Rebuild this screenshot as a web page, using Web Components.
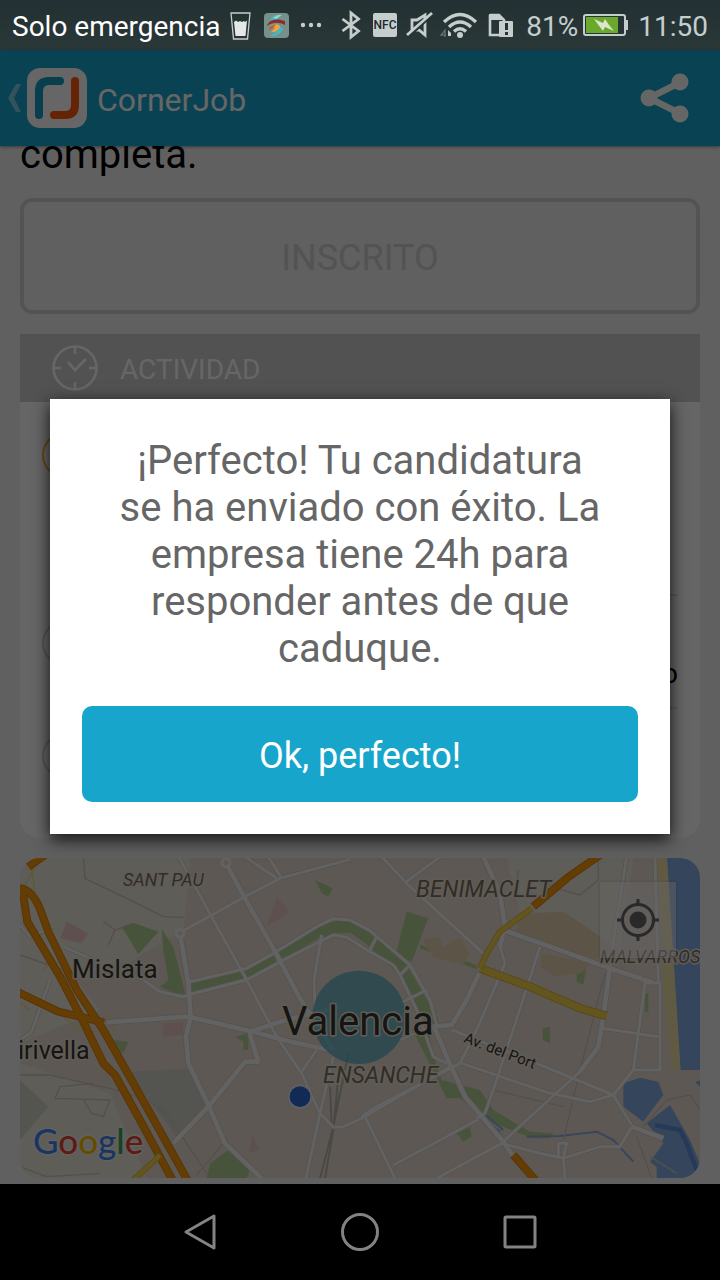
<!DOCTYPE html>
<html lang="es">
<head>
<meta charset="utf-8">
<meta name="viewport" content="width=device-width, initial-scale=1">
<title>CornerJob</title>
<style>
  body { margin: 0; background: #000; font-family: Roboto, "Liberation Sans", sans-serif; }
</style>
</head>
<body>
<phone-screen>
  <status-bar slot="status" carrier="Solo emergencia" battery="81%" time="11:50"></status-bar>
  <app-bar heading="CornerJob"></app-bar>
  <job-page>
    <span slot="description">completa.</span>
    <activity-card heading="ACTIVIDAD">
      <activity-step size="tall" active></activity-step>
      <activity-step>o</activity-step>
      <activity-step last></activity-step>
    </activity-card>
    <city-map></city-map>
  </job-page>
  <message-dialog slot="overlay" action="Ok, perfecto!">¡Perfecto! Tu candidatura se ha enviado con éxito. La empresa tiene 24h para responder antes de que caduque.</message-dialog>
  <nav-bar slot="nav"></nav-bar>
</phone-screen>

<script>
const ICONS = {
  glass: [20, 32, `<path d="M0 4H19L16.500 30H2.500Z" fill="none" stroke="#c5cecd" stroke-width="1.300"/><path d="M3 13L5 11.500L7 13L9 12L11 13L13 12L14 13L16 11.500L14.500 27H4.500Z" fill="#e4e9e8"/>`],
  app: [28, 32, `<rect x="3" y="4" width="25" height="25" rx="4" fill="#76908a"/><path d="M20 6C12 6 9 9 9 13L18 16L22 20C20 25 14 28 9 27L15 23L17 19L12 17" fill="#48b5c4"/><path d="M6 17C8 10 16 9 24 12L24 16C18 13 12 13 6 17Z" fill="#8d2c2b"/><path d="M9 18C13 14 19 15 19 18C17 22 13 24 10 23L14 19Z" fill="#eca53a"/><path d="M9 18L15 15L13 18L8 21Z" fill="#d54b2b"/><path d="M12 9Q16 5 21 6L15 10Z" fill="#91d4d5"/>`],
  dots: [26, 32, `<g fill="#c5cecd"><circle cx="4" cy="16" r="2.200"/><circle cx="12" cy="16" r="2.200"/><circle cx="20" cy="16" r="2.200"/></g>`],
  bluetooth: [26, 32, `<path d="M4.500 10L20.500 22L13 28V4L20.500 10L4.500 22" fill="none" stroke="#c5cecd" stroke-width="2.800"/>`],
  nfc: [24, 32, `<rect x="-1" y="4" width="24" height="24" rx="2" fill="#c5cecd"/><text x="11" y="20" text-anchor="middle" font-size="12" font-weight="500" fill="#1c2829">NFC</text>`],
  mute: [26, 32, `<path d="M4 21V11H9L17 6V26L11 21Z" fill="none" stroke="#c5cecd" stroke-width="2.800"/><path d="M-1 29L24 6" stroke="#263435" stroke-width="3"/><path d="M-1 26L24 4" stroke="#c5cecd" stroke-width="2.800"/>`],
  wifi: [36, 32, `<g fill="none" stroke="#c5cecd" stroke-width="3.400"><path d="M0 13Q16 -2 32 13"/><path d="M5 18Q16 8 27 18"/><path d="M10 22.500Q16 17 22 22.500"/></g><circle cx="16" cy="26" r="3" fill="#c5cecd"/><path d="M4 21L7 24V27H4Z" fill="#c5cecd"/><path d="M1 28V21L-3 26H2" fill="none" stroke="#64706f" stroke-width="1.300"/>`],
  sim: [26, 32, `<path d="M0 6V26H14M0 6H9L14 11V13" fill="none" stroke="#c5cecd" stroke-width="2.600"/><path d="M-1 5H9L15 11H-1Z" fill="#c5cecd"/><rect x="9" y="12" width="14" height="16" rx="1" fill="#c5cecd"/><path d="M16.500 14V21M16.500 23V26" stroke="#263435" stroke-width="3"/>`],
  battery: [45, 32, `<rect x="1" y="6" width="41" height="20" rx="2" fill="#263435" stroke="#c5cecd" stroke-width="2"/><path d="M43 11H45V21H43Z" fill="#c5cecd"/><path d="M3 8H35V24H3Z" fill="#6aa92b"/><path d="M11 10L20 14L22 10L26 16L31 22L22 18L20 22Z" fill="#dbe6cc"/>`],
  back: [14, 28, `<path d="M8 0H13L6 14L13 28H8L0 14Z" fill="#fff" fill-opacity=".45"/>`],
  logo: [60, 60, `<rect width="60" height="60" rx="13" fill="#fff"/><path d="M12 47V23Q12 13 22 13H33" fill="none" stroke="#149fc2" stroke-width="8" stroke-linecap="round"/><path d="M48 13V37Q48 47 38 47H27" fill="none" stroke="#ff5a12" stroke-width="8" stroke-linecap="round"/>`],
  share: [50, 50, `<path d="M41 9L9 25L41 41" fill="none" stroke="#fff" stroke-width="6.500"/><g fill="#fff"><circle cx="40" cy="9" r="8.500"/><circle cx="9" cy="25" r="8.500"/><circle cx="40" cy="41" r="8.500"/></g>`],
  clock: [46, 46, `<g fill="none" stroke="#fff" stroke-width="2.600"><circle cx="23" cy="23" r="21.500"/><path d="M23 1V9M23 37V45M1 23H9M37 23H45M16 17L23 25L34 14"/></g>`],
  locate: [44, 44, `<g fill="none" stroke="#666" stroke-width="3"><circle cx="22" cy="22" r="15.500"/><path d="M22 1V7M22 37V43M1 22H7M37 22H43"/></g><circle cx="22" cy="22" r="8.500" fill="#666"/>`],
  navBack: [40, 40, `<path d="M6 20L34 4V36Z" fill="none" stroke="#838383" stroke-width="3" stroke-linejoin="round"/>`],
  navHome: [40, 40, `<circle cx="20" cy="20" r="17.500" fill="none" stroke="#838383" stroke-width="3"/>`],
  navRecent: [40, 40, `<rect x="5" y="5" width="30" height="30" rx="1" fill="none" stroke="#838383" stroke-width="3"/>`]
};

class UiIcon extends HTMLElement {
  connectedCallback() {
    const [w, h, body] = ICONS[this.getAttribute('name')];
    this.attachShadow({ mode: 'open' }).innerHTML = `
      <style>
        :host { display: block; flex: none; }
        svg { display: block; overflow: visible; }
      </style>
      <svg width="${w}" height="${h}" viewBox="0 0 ${w} ${h}" aria-hidden="true">${body}</svg>`;
  }
}

class PhoneScreen extends HTMLElement {
  connectedCallback() {
    this.attachShadow({ mode: 'open' }).innerHTML = `
      <style>
        :host { display: flex; flex-direction: column; min-height: 100vh; }
        main { position: relative; flex: 1; display: flex; flex-direction: column; background: #f0f0f0; }
      </style>
      <slot name="status"></slot>
      <main>
        <slot></slot>
        <slot name="overlay"></slot>
      </main>
      <slot name="nav"></slot>`;
  }
}

class StatusBar extends HTMLElement {
  connectedCallback() {
    this.attachShadow({ mode: 'open' }).innerHTML = `
      <style>
        :host {
          display: flex;
          justify-content: space-between;
          align-items: center;
          height: 50px;
          padding: 0 12px;
          background: linear-gradient(#223033, #2b3838);
          color: #c5cecd;
          font-size: 28px;
          line-height: 32px;
          white-space: nowrap;
        }
        div { display: flex; align-items: center; gap: 10px; }
        span, time { padding-top: 4px; }
        .power { gap: 5px; }
        .carrier { color: #fff; }
      </style>
      <div>
        <span class="carrier">${this.getAttribute('carrier')}</span>
        <ui-icon name="glass"></ui-icon>
        <ui-icon name="app"></ui-icon>
        <ui-icon name="dots"></ui-icon>
      </div>
      <div>
        <ui-icon name="bluetooth"></ui-icon>
        <ui-icon name="nfc"></ui-icon>
        <ui-icon name="mute"></ui-icon>
        <ui-icon name="wifi"></ui-icon>
        <ui-icon name="sim"></ui-icon>
        <div class="power">
          <span>${this.getAttribute('battery')}</span>
          <ui-icon name="battery"></ui-icon>
        </div>
        <time>${this.getAttribute('time')}</time>
      </div>`;
  }
}

class AppBar extends HTMLElement {
  connectedCallback() {
    this.attachShadow({ mode: 'open' }).innerHTML = `
      <style>
        :host {
          display: flex;
          align-items: center;
          height: 96px;
          padding: 0 30px 0 8px;
          background: #18a5cc;
          box-shadow: 0 1px 3px rgba(0, 0, 0, 0.4);
          color: #fff;
        }
        button {
          display: flex;
          align-items: center;
          gap: 5px;
          padding: 0;
          border: 0;
          background: none;
          cursor: pointer;
        }
        h1 { flex: 1; margin: 0 0 0 10px; padding-top: 4px; font-size: 32px; font-weight: 400; line-height: 40px; }
      </style>
      <button type="button" aria-label="Volver">
        <ui-icon name="back"></ui-icon>
        <ui-icon name="logo"></ui-icon>
      </button>
      <h1>${this.getAttribute('heading')}</h1>
      <button type="button" aria-label="Compartir"><ui-icon name="share"></ui-icon></button>`;
  }
}

class JobPage extends HTMLElement {
  connectedCallback() {
    this.attachShadow({ mode: 'open' }).innerHTML = `
      <style>
        :host { display: flex; flex-direction: column; gap: 20px; padding: 0 20px 6px; }
        /* last line of the description, scrolled half under the app bar */
        .description {
          display: flex;
          align-items: flex-end;
          height: 32px;
          overflow: hidden;
          color: #000;
          font-size: 40px;
          line-height: 47px;
        }
        button {
          height: 116px;
          padding: 4px 0 0;
          border: 4px solid #cfcfcf;
          border-radius: 12px;
          background: none;
          color: #cfcfcf;
          font: 36px Roboto, "Liberation Sans", sans-serif;
        }
      </style>
      <div class="description"><slot name="description"></slot></div>
      <button type="button">INSCRITO</button>
      <slot></slot>`;
  }
}

class ActivityCard extends HTMLElement {
  connectedCallback() {
    this.attachShadow({ mode: 'open' }).innerHTML = `
      <style>
        :host { display: block; background: #fff; border-radius: 0 0 20px 20px; }
        header {
          display: flex;
          align-items: center;
          gap: 22px;
          height: 68px;
          padding: 0 32px;
          background: #cdcdcd;
        }
        h2 { margin: 0; padding-top: 4px; color: #fff; font-size: 28px; font-weight: 400; line-height: 36px; }
      </style>
      <header>
        <ui-icon name="clock"></ui-icon>
        <h2>${this.getAttribute('heading')}</h2>
      </header>
      <slot></slot>`;
  }
}

class ActivityStep extends HTMLElement {
  connectedCallback() {
    this.attachShadow({ mode: 'open' }).innerHTML = `
      <style>
        :host {
          display: flex;
          gap: 20px;
          height: 113px;
          margin: 0 22px;
          color: #000;
          font-size: 28px;
        }
        :host([size="tall"]) { height: 194px; }
        :host([last]) { height: 129px; }
        i { width: 42px; height: 42px; margin-top: 24px; border: 2px solid #d4d4d4; border-radius: 50%; }
        :host([active]) i { margin-top: 30px; border-color: #ffb62e; }
        div { flex: 1; padding-top: 60px; border-bottom: 2px solid #e4e4e4; line-height: 36px; text-align: right; }
        :host([last]) div { border: 0; }
      </style>
      <i></i>
      <div><slot></slot></div>`;
  }
}

class CityMap extends HTMLElement {
  connectedCallback() {
    this.attachShadow({ mode: 'open' }).innerHTML = `
      <style>
        :host { display: block; position: relative; height: 320px; border-radius: 20px; overflow: hidden; }
        svg { display: block; width: 100%; height: 100%; }
        path { fill: none; stroke-linejoin: round; }
        .land { fill: #ece8dc; }
        .green { fill: #b4cf95; }
        .river { stroke: #b4cf95; stroke-width: 36; }
        .pink { fill: #ecc9c2; }
        .sand { fill: #e8d3b3; }
        .grey { fill: #d2d1cb; }
        .beach { fill: #f0e2a8; }
        .sea { fill: #86aee6; }
        .deep { stroke: #5f90dc; stroke-width: 14; }
        .stream { stroke: #8ab0e4; stroke-width: 6; }
        .rail { stroke: #bab4ac; stroke-width: 6; }
        .ramp { stroke: #f0dc90; stroke-width: 5; }
        .lane { stroke: #cfc8be; stroke-width: 4; }
        .case { stroke: #d3cac1; stroke-width: 19; }
        .road { stroke: #f6f4f6; stroke-width: 14; }
        .case.thin { stroke-width: 13; }
        .road.thin { stroke-width: 9; }
        .highway-case { stroke: #dc8410; stroke-width: 24; }
        .highway { stroke: #fb9a0c; stroke-width: 18; }
        .avenue-case { stroke: #dcb440; stroke-width: 26; }
        .avenue { stroke: #f6d84c; stroke-width: 20; }
        .avenue-case.thin { stroke-width: 18; }
        .avenue.thin { stroke-width: 13; }
        text { fill: #37352c; paint-order: stroke; stroke: #eee6da; stroke-width: 3px; stroke-linejoin: round; }
        .district { fill: #7d705a; font-style: italic; }
        .google text { font-family: Lato, Roboto, sans-serif; font-weight: 500; stroke: #f4f2ec; }
        button {
          position: absolute;
          top: 24px;
          right: 24px;
          display: grid;
          place-items: center;
          width: 76px;
          height: 76px;
          padding: 0;
          border: 0;
          background: rgba(255, 255, 255, 0.45);
          box-shadow: 0 0 3px rgba(0, 0, 0, 0.2);
        }
      </style>
      <svg viewBox="0 0 680 320" preserveAspectRatio="xMidYMid slice" role="img" aria-label="Mapa de Valencia">
        <defs>
          <g id="main">
            <path d="M320 517L440 508L565 500L760 545L850 570L985 600"/>
            <path d="M540 250L565 400L572 500L558 560L565 640L625 765L675 880L785 985"/>
            <path d="M520 880L625 770L735 635L775 635L752 560L750 545L850 512L1020 470"/>
            <path d="M678 40L735 145L820 295L900 445L960 540L1000 600"/>
            <path d="M1450 20L1500 130L1515 230L1500 290M1510 240L1650 290L1830 355L1960 398"/>
            <path d="M1445 355L1400 450L1355 525L1300 530"/>
            <path d="M1300 525L1340 620L1395 740L1510 875L1540 920"/>
            <path d="M1830 350L1810 500L1795 590L1740 665"/>
            <path d="M1895 830L1990 865"/>
          </g>
          <g id="minor">
            <path d="M536 20L635 200L735 380L830 560L905 670L960 790L1000 832L1030 830L1085 805L1360 645"/>
            <path d="M535 250L645 190L735 140L840 85L1050 28M1000 620L960 790L918 985"/>
            <path d="M1740 665L1580 810L1505 880L1310 985M1505 880L1600 905L1690 925L1800 890L1860 890L1895 830"/>
            <path d="M570 395L740 355L820 310L950 230L1000 206L1050 210L1110 242L1230 345L1290 450L1310 525"/>
            <path d="M560 435L740 390L860 325L1000 255L1040 262L1100 300L1180 345L1200 375L1250 480L1300 620L1340 640"/>
            <path d="M735 20L830 85M805 20L845 85M430 390L480 425L550 440L735 390"/>
            <path d="M965 255L942 390L945 480M1145 20L1230 110L1450 310M1200 460L1280 420M1110 300L1130 260M1200 375L1230 345"/>
            <path d="M1220 95L1320 20M1620 290L1575 430L1490 690L1455 790L1430 805"/>
            <path d="M1500 290L1515 340L1430 540L1380 640L1120 775L1085 800M1355 540L1560 620L1840 735"/>
            <path d="M1385 640L1650 730L1770 755L1840 735L1900 660L1935 400L1980 398V660L1900 660"/>
            <path d="M1840 735L1895 825M1805 535L1975 560M1880 20L1845 240L1830 350M1965 20L1975 400"/>
            <path d="M1095 800L1185 985M1180 945L1340 860L1435 808M1200 570L1290 530"/>
            <path d="M950 600L905 665M1695 985L1690 925L1700 880H1675V920"/>
            <path d="M190 290L270 325M150 390L95 545L60 570M60 225L90 260L160 230"/>
          </g>
          <g id="highways">
            <path d="M60 115Q100 120 125 190L145 245L230 420L310 540L400 700L565 995"/>
            <path d="M66 110L82 215L180 380L250 515L310 640L345 675L420 810L520 995"/>
            <path d="M50 425L175 485L240 500L312 518M85 50L135 15M1800 15L1700 85L1600 170M1540 915L1610 995"/>
          </g>
        </defs>
        <rect width="680" height="320" fill="#e8ddd1"/>
        <g transform="scale(.33333) translate(-60 -24)">
          <path class="land" d="M60 24H570L550 240L400 330L220 380L300 480L60 580ZM60 640L330 730L440 985H60ZM1520 24H1900L1860 300L1700 190L1560 190Z"/>
          <path class="grey" d="M60 690L145 770L60 870ZM390 665L570 655L620 765L530 860L440 740Z"/>
          <path class="pink" d="M200 215L265 250L245 280L180 265ZM830 140L870 185L800 230ZM488 520L550 515V555L490 560ZM755 850L780 900L748 908Z"/>
          <path class="green" d="M365 230L400 218L475 245L415 312ZM485 238L520 290L555 430L535 435L480 410L505 390L490 300ZM945 90L998 115L985 140L965 130ZM620 985L630 940L685 900L755 950L740 985ZM706 560L745 550L745 600L730 600V575ZM340 570L385 575L370 610L340 600Z"/>
          <path class="green" d="M1220 185L1285 205L1235 335L1185 320ZM1235 535L1285 540L1305 630L1325 690L1440 720L1480 780L1590 845L1660 850L1650 865H1600L1480 820L1380 745H1340L1295 655ZM1730 350L1760 345L1750 405L1730 395ZM1628 535L1650 530V580L1628 570ZM1260 285L1430 345V358L1260 295ZM1590 235L1620 230L1625 260H1600ZM1370 850L1410 830L1415 860L1390 875ZM1935 430H1945V485H1935Z"/>
          <path class="river" d="M570 413L740 374L950 247L1015 230L1060 232L1110 268L1205 355L1300 520"/>
          <path class="sand" d="M1560 190L1690 185L1800 260V330L1700 300L1545 245ZM1265 270L1320 260L1330 290L1380 260L1410 310L1390 345L1300 320ZM1625 310L1780 340L1740 370L1660 380L1620 350Z"/>
          <path class="beach" d="M1972 20H2002L2043 660H2015L1990 400Z"/>
          <path class="sea" d="M2001 20H2105V660H2042ZM1870 700L1920 683L1975 695L1990 735L1930 815L1870 770ZM2010 765L2070 870L2100 940V985H1970V950L1950 935L1990 880L1940 820ZM2085 695L2105 690V715Z"/>
          <path class="deep" d="M1965 825L2040 840L2060 880L2090 960"/>
          <path class="stream" d="M1580 860L1680 858L1790 845L1840 870L1900 935M1450 790L1510 840M1455 810L1500 845"/>
          <path class="lane" d="M250 20L255 85L400 155L490 200L550 202M60 315L190 360L220 450M60 675L150 675L350 720M310 215L345 240L325 285M345 240L380 230M350 720L440 750L500 790L540 850L630 985M590 975L670 880M180 710L165 745L330 750L310 800L275 790L250 750M180 710L280 700M60 950L140 980L300 970M1555 60L1550 110M1795 24V90L1740 135L1670 115L1620 90"/>
          <path class="lane" d="M1815 370L1740 660L1690 870M1480 720L1690 770M1930 830L2000 750L2070 735L2100 780M1910 860L1955 985M1950 920L2030 970"/>
          <path class="rail" d="M1045 610L1000 830L960 985M1015 680L1000 840L975 985M990 710L995 830M1030 690L1005 790"/>
          <path class="ramp" d="M105 50L75 105M95 55L105 130M60 460L90 480M150 340L130 360M190 500L240 540L300 545M320 490L350 560M490 850L510 920"/>
          <use href="#minor" class="case thin"/>
          <use href="#main" class="case"/>
          <use href="#minor" class="road thin"/>
          <use href="#main" class="road"/>
          <circle cx="678" cy="38" r="12" class="road thin" fill="#e8ddd1"/>
          <circle cx="540" cy="250" r="12" class="road thin" fill="#e8ddd1"/>
          <use href="#highways" class="highway-case"/>
          <use href="#highways" class="highway"/>
          <path class="avenue-case" d="M1440 355L1590 410L1740 475L1820 498"/>
          <path class="avenue" d="M1440 355L1590 410L1740 475L1820 498"/>
          <path class="avenue-case thin" d="M1595 175L1500 245L1460 310L1440 355M480 915L455 940L400 990"/>
          <path class="avenue thin" d="M1595 175L1500 245L1460 310L1440 355M480 915L455 940L400 990"/>
          <circle cx="1077" cy="502" r="140" fill="#43aac3" fill-opacity=".68"/>
          <circle cx="900" cy="740" r="36" fill="#e8f0fa"/>
          <circle cx="900" cy="740" r="31" fill="#2c6cd8"/>
        </g>
        <text x="103" y="28" font-size="18" class="district">SANT PAU</text>
        <text x="396" y="39" font-size="23" class="district">BENIMACLET</text>
        <text x="580" y="105" font-size="18" class="district">MALVARROS</text>
        <text x="303" y="225" font-size="23" class="district">ENSANCHE</text>
        <text x="52" y="120" font-size="26">Mislata</text>
        <text x="-2" y="201" font-size="25">irivella</text>
        <text x="262" y="177" font-size="40">Valencia</text>
        <text font-size="15" transform="translate(443 184) rotate(21)">Av. del Port</text>
        <g class="google"><text x="13" y="296" font-size="35"><tspan fill="#4285f4">G</tspan><tspan fill="#ea4335">o</tspan><tspan fill="#fbbc05">o</tspan><tspan fill="#4285f4">g</tspan><tspan fill="#34a853">l</tspan><tspan fill="#ea4335">e</tspan></text></g>
      </svg>
      <button type="button" aria-label="Mi ubicación"><ui-icon name="locate"></ui-icon></button>`;
  }
}

class MessageDialog extends HTMLElement {
  connectedCallback() {
    this.attachShadow({ mode: 'open' }).innerHTML = `
      <style>
        :host {
          position: absolute;
          inset: 0;
          display: flex;
          align-items: center;
          padding: 0 50px 2px;
          background: rgba(0, 0, 0, 0.6);
        }
        section {
          flex: 1;
          display: flex;
          flex-direction: column;
          gap: 34px;
          padding: 38px 32px 32px;
          background: #fff;
          box-shadow: 0 5px 16px rgba(0, 0, 0, 0.85);
        }
        p {
          margin: 0;
          padding: 0 32px;
          color: #666;
          font-size: 40px;
          line-height: 47px;
          text-align: center;
        }
        button {
          height: 96px;
          padding: 4px 0 0;
          border: 0;
          border-radius: 10px;
          background: #18a5cc;
          color: #fff;
          font: 36px Roboto, "Liberation Sans", sans-serif;
          cursor: pointer;
        }
      </style>
      <section role="dialog" aria-modal="true" aria-labelledby="text">
        <p id="text"><slot></slot></p>
        <button type="button">${this.getAttribute('action')}</button>
      </section>`;
    this.shadowRoot.querySelector('button').addEventListener('click', () => this.remove());
  }
}

class NavBar extends HTMLElement {
  connectedCallback() {
    this.attachShadow({ mode: 'open' }).innerHTML = `
      <style>
        :host { display: flex; justify-content: center; height: 96px; background: #000; }
        button {
          display: grid;
          place-items: center;
          width: 160px;
          padding: 0;
          border: 0;
          background: none;
        }
      </style>
      <button type="button" aria-label="Atrás"><ui-icon name="navBack"></ui-icon></button>
      <button type="button" aria-label="Inicio"><ui-icon name="navHome"></ui-icon></button>
      <button type="button" aria-label="Recientes"><ui-icon name="navRecent"></ui-icon></button>`;
  }
}

customElements.define('ui-icon', UiIcon);
customElements.define('phone-screen', PhoneScreen);
customElements.define('status-bar', StatusBar);
customElements.define('app-bar', AppBar);
customElements.define('job-page', JobPage);
customElements.define('activity-card', ActivityCard);
customElements.define('activity-step', ActivityStep);
customElements.define('city-map', CityMap);
customElements.define('message-dialog', MessageDialog);
customElements.define('nav-bar', NavBar);
</script>
</body>
</html>
